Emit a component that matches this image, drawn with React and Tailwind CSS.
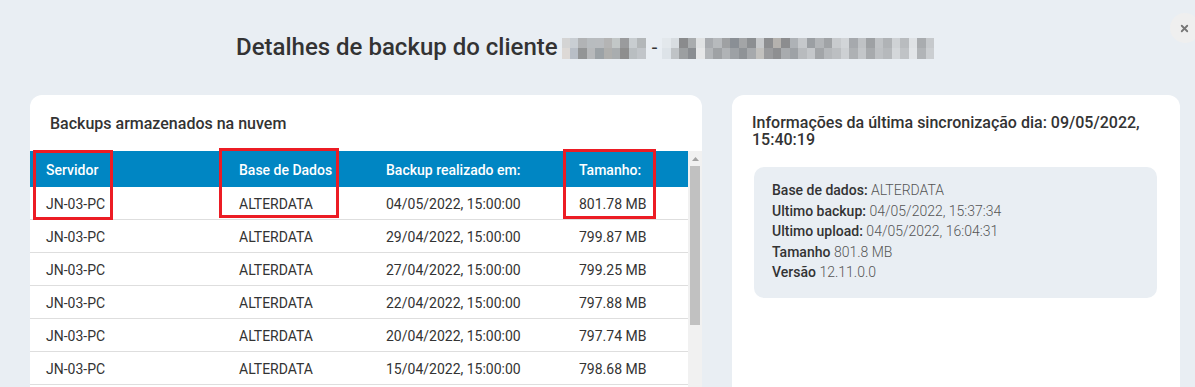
import { X } from "lucide-react";

const backups = [
  { server: "JN-03-PC", db: "ALTERDATA", date: "04/05/2022, 15:00:00", size: "801.78 MB" },
  { server: "JN-03-PC", db: "ALTERDATA", date: "29/04/2022, 15:00:00", size: "799.87 MB" },
  { server: "JN-03-PC", db: "ALTERDATA", date: "27/04/2022, 15:00:00", size: "799.25 MB" },
  { server: "JN-03-PC", db: "ALTERDATA", date: "22/04/2022, 15:00:00", size: "797.88 MB" },
  { server: "JN-03-PC", db: "ALTERDATA", date: "20/04/2022, 15:00:00", size: "797.74 MB" },
  { server: "JN-03-PC", db: "ALTERDATA", date: "15/04/2022, 15:00:00", size: "798.68 MB" },
];

// pixelated (censored) client name
const topA = ["#d4d4d4", "#c9ced3", "#b1b3b5", "#b8bcbf", "#b9bcbf", "#b4b4b4", "#c2c7c7", "#9a9b9d", "#c8cdd0", "#b3b7b9"];
const botA = ["#ddd9d6", "#b8bec6", "#939596", "#b7b9bb", "#9ca2a6", "#afafad", "#a9adaf", "#8e8e8e", "#b9bec1", "#c1c5c9"];
const topB = ["#e3e8ec", "#d8dde1", "#8a8b8d", "#a9acae", "#e0e2e3", "#a8abaf", "#b7babd", "#9fa1a3", "#8a8f95", "#a3a5a7", "#8c8f92", "#c7c9cb", "#8d8e90", "#b5b2ae", "#8c8d8f", "#aeb2b6", "#c5c8cb", "#9b9fa3", "#b2b5b8", "#a0a3a6", "#c8cbce", "#d2d5d8", "#a6a9ad", "#bfc2c5", "#9ea1a4", "#c0c3c6", "#b0b3b6", "#cfd2d5", "#b9bcbf", "#dfe2e5", "#a9acaf", "#c6c9cc"];
const botB = ["#dde3e8", "#bfc3c6", "#9c9fa1", "#8a8d91", "#e6e7e8", "#b3b6b9", "#9fa2a5", "#b0b3b6", "#9da1a5", "#8f9397", "#a6a9ac", "#c2c1be", "#9a9b9d", "#8e8f91", "#a8abae", "#9ea2a6", "#b8bbbe", "#c4c7ca", "#a2a5a8", "#b5b8bb", "#bcbfc2", "#cdd0d3", "#aeb1b4", "#c3c6c9", "#a7aaad", "#bec1c4", "#b6b9bc", "#d4d7da", "#c0c3c6", "#e2e5e8", "#b1b4b7", "#cbced1"];

const Mosaic = ({ top, bottom, width }) => (
  <span className="inline-flex flex-col h-[21px]" style={{ width }}>
    <span className="flex h-[10px]">
      {top.map((c, i) => (
        <span key={i} className="flex-1" style={{ backgroundColor: c }} />
      ))}
    </span>
    <span className="flex h-[11px]">
      {bottom.map((c, i) => (
        <span key={i} className="flex-1" style={{ backgroundColor: c }} />
      ))}
    </span>
  </span>
);

const Annotation = ({ className }) => (
  <div className={`absolute border-[3px] border-[#ec1c24] pointer-events-none ${className}`} />
);

const InfoLine = ({ label, value }) => (
  <div>
    <span className="font-medium text-[#333]">{label}</span>{" "}
    <span className="font-light text-[#555]">{value}</span>
  </div>
);

export default function App() {
  return (
    <div className="relative w-[1195px] h-[387px] overflow-hidden bg-[#e9eef3] font-['Roboto',sans-serif] text-[#333]">
      <button className="absolute left-[1170px] top-[13px] w-[30px] h-[30px] rounded-full bg-[#efefef] flex items-center justify-center text-[#777]">
        <X size={11} strokeWidth={4} className="-ml-[1px]" />
      </button>

      <div className="h-[95px] flex items-center pl-[236px] pb-[2px]">
        <h1 className="flex items-center text-[24px] font-medium text-[#333]">
          <span>Detalhes de backup do cliente</span>
          <span className="ml-[4px] mt-[3px] flex">
            <Mosaic top={topA} bottom={botA} width={84} />
          </span>
          <span className="ml-[6px] text-[20px] font-normal">-</span>
          <span className="ml-[5px] mt-[3px] flex">
            <Mosaic top={topB} bottom={botB} width={272} />
          </span>
        </h1>
      </div>

      <div className="flex gap-[30px] pl-[30px]">
        <div className="relative w-[672px] h-[320px] bg-white rounded-t-[12px] overflow-hidden">
          <h2 className="px-[20px] pt-[17px] h-[56px] text-[16px] font-medium text-[#333]">
            Backups armazenados na nuvem
          </h2>
          <div className="flex items-start">
            <table className="w-[658px] table-fixed border-collapse text-[14px] leading-[20px]">
              <colgroup>
                <col className="w-[193px]" />
                <col className="w-[147px]" />
                <col className="w-[193px]" />
                <col />
              </colgroup>
              <thead>
                <tr className="bg-[#0086c3] text-white">
                  <th className="text-left font-medium pl-[16px] pt-[9px] pb-[7px]">Servidor</th>
                  <th className="text-left font-medium pl-[16px] pt-[9px] pb-[7px]">Base de Dados</th>
                  <th className="text-left font-medium pl-[16px] pt-[9px] pb-[7px]">Backup realizado em:</th>
                  <th className="text-left font-medium pl-[16px] pt-[9px] pb-[7px]">Tamanho:</th>
                </tr>
              </thead>
              <tbody>
                {backups.map((b, i) => (
                  <tr key={i} className="border-b border-[#dedede] text-[#333]">
                    <td className="pl-[16px] pt-[7px] pb-[5px]">{b.server}</td>
                    <td className="pl-[16px] pt-[7px] pb-[5px]">{b.db}</td>
                    <td className="pl-[16px] pt-[7px] pb-[5px]">{b.date}</td>
                    <td className="pl-[16px] pt-[7px] pb-[5px]">{b.size}</td>
                  </tr>
                ))}
              </tbody>
            </table>
            <div className="w-[14px] h-[270px] bg-[#f1f1f1] flex flex-col items-center">
              <div className="h-[15px] flex items-center justify-center">
                <svg width="7" height="4" viewBox="0 0 7 4">
                  <polygon points="3.5,0 7,4 0,4" fill="#a3a3a3" />
                </svg>
              </div>
              <div className="w-[10px] h-[159px] bg-[#c1c1c1]" />
            </div>
          </div>
          <Annotation className="left-[3px] top-[55px] w-[80px] h-[70px]" />
          <Annotation className="left-[189px] top-[53px] w-[120px] h-[70px]" />
          <Annotation className="left-[533px] top-[54px] w-[93px] h-[70px]" />
        </div>

        <div className="w-[448px] h-[320px] bg-white rounded-t-[12px] pl-[20px] pr-[23px]">
          <h2 className="pt-[19px] text-[16px] leading-[17px] font-medium text-[#333]">
            Informações da última sincronização dia: 09/05/2022, 15:40:19
          </h2>
          <div className="mt-[19px] ml-[2px] bg-[#e9eef3] rounded-[10px] pl-[18px] pt-[13px] pb-[16px] h-[131px] text-[14px] leading-[20.5px]">
            <InfoLine label="Base de dados:" value="ALTERDATA" />
            <InfoLine label="Ultimo backup:" value="04/05/2022, 15:37:34" />
            <InfoLine label="Ultimo upload:" value="04/05/2022, 16:04:31" />
            <InfoLine label="Tamanho" value="801.8 MB" />
            <InfoLine label="Versão" value="12.11.0.0" />
          </div>
        </div>
      </div>
    </div>
  );
}
